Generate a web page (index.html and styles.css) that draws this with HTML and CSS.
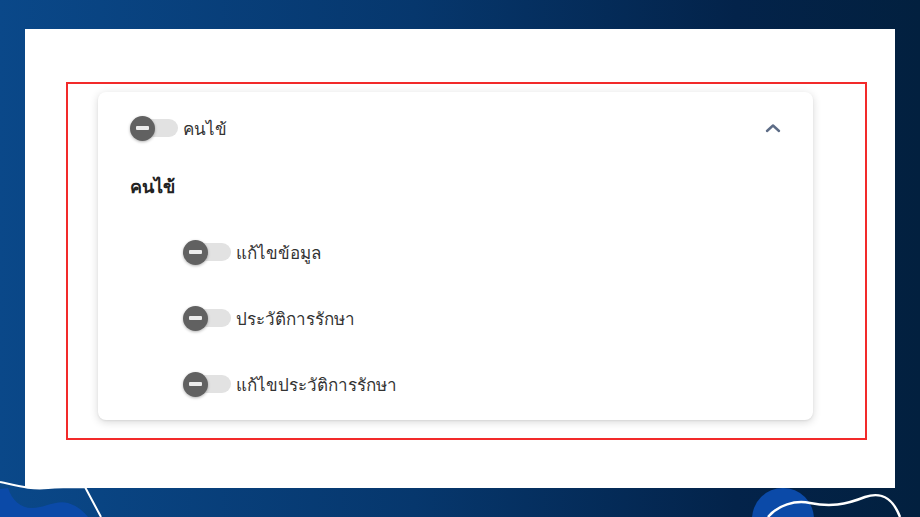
FILE: index.html
```html
<!DOCTYPE html>
<html lang="th">
<head>
  <meta charset="UTF-8">
  <meta name="viewport" content="width=device-width, initial-scale=1.0">
  <title>สิทธิ์การใช้งาน</title>
  <link rel="stylesheet" href="styles.css">
</head>
<body>
  <!-- ลายตกแต่งด้านล่าง -->
  <svg class="deco" viewBox="0 0 920 517" xmlns="http://www.w3.org/2000/svg">
    <path d="M0 489 L8 488 C12 500 20 508 32 508 C45 508 55 500 68 503 C78 506 84 512 88 517 L0 517 Z" fill="#0b4aa8" />
    <path d="M0 482 C15 485 30 490 48 488 C60 487 75 487 85 487 L101 517" fill="none" stroke="#fff" stroke-width="2" />
    <circle cx="783" cy="519" r="31" fill="#0b4aa8" />
    <path d="M768 517 C778 505 795 500 810 503 C830 507 845 505 865 497 C880 492 892 496 900 517" fill="none" stroke="#fff" stroke-width="2.5" />
  </svg>

  <div class="panel">
    <div class="highlight">
      <div class="card">
        <div class="card-header">
          <label class="toggle">
            <span class="switch"><span class="track"></span><span class="thumb"></span></span>
            <span class="toggle-label">คนไข้</span>
          </label>
          <svg class="chevron" viewBox="0 0 16 10" xmlns="http://www.w3.org/2000/svg">
            <path d="M2 8 L8 2.5 L14 8" fill="none" stroke="currentColor" stroke-width="2.4" stroke-linecap="round" stroke-linejoin="round" />
          </svg>
        </div>

        <div class="card-body">
          <p class="group-title">คนไข้</p>
          <div class="perm-list">
            <label class="toggle">
              <span class="switch"><span class="track"></span><span class="thumb"></span></span>
              <span class="toggle-label">แก้ไขข้อมูล</span>
            </label>
            <label class="toggle">
              <span class="switch"><span class="track"></span><span class="thumb"></span></span>
              <span class="toggle-label">ประวัติการรักษา</span>
            </label>
            <label class="toggle">
              <span class="switch"><span class="track"></span><span class="thumb"></span></span>
              <span class="toggle-label">แก้ไขประวัติการรักษา</span>
            </label>
          </div>
        </div>
      </div>
    </div>
  </div>
</body>
</html>
```

FILE: styles.css
```css
body {
  font-family: Roboto, "Noto Sans", Arial, sans-serif;
  margin: 0;
  padding: 29px 25px;
  height: 517px;
  box-sizing: border-box;
  background: linear-gradient(90deg, #0a4889 0%, #06376d 45%, #03234a 80%, #02203f 100%);
  position: relative;
  overflow: hidden;
}
.deco {
  position: absolute;
  left: 0;
  top: 0;
  width: 920px;
  height: 517px;
}
.panel {
  position: relative;
  width: 870px;
  height: 459px;
  background-color: #fff;
  padding: 53px 0 0 41px;
  box-sizing: border-box;
}
.highlight {
  width: 801px;
  border: 2px solid #f22a2a;
  box-sizing: border-box;
  padding: 8px 52px 18px 30px;
}
.card {
  background-color: #fff;
  border-radius: 8px;
  box-shadow: 0 2px 8px rgba(0, 0, 0, 0.16), 0 1px 2px rgba(0, 0, 0, 0.06);
}
.card-header {
  height: 72px;
  display: flex;
  align-items: center;
  justify-content: space-between;
  padding: 0 32px;
}
.chevron {
  width: 16px;
  height: 10px;
  color: #5d6c86;
}
.card-body {
  padding: 11px 32px 24px;
}
.group-title {
  margin: 0;
  font-size: 18px;
  font-weight: bold;
  line-height: 24px;
  color: #222;
}
.perm-list {
  display: flex;
  flex-direction: column;
  gap: 42px;
  margin-top: 41px;
  padding-left: 53px;
}
.toggle {
  display: flex;
  align-items: center;
  height: 24px;
  cursor: pointer;
}
.switch {
  position: relative;
  width: 48px;
  height: 24px;
  flex-shrink: 0;
}
.track {
  position: absolute;
  left: 7px;
  top: 3px;
  width: 41px;
  height: 18px;
  border-radius: 9px;
  background-color: #e2e2e2;
}
.thumb {
  position: absolute;
  left: 0;
  top: -0.5px;
  width: 25px;
  height: 25px;
  border-radius: 50%;
  background-color: #616161;
  box-shadow: 0 1px 3px rgba(0, 0, 0, 0.3);
}
.thumb::after {
  content: "";
  position: absolute;
  left: 6px;
  top: 10.5px;
  width: 13px;
  height: 4px;
  border-radius: 1px;
  background-color: #ececec;
}
.toggle-label {
  margin-left: 5px;
  font-size: 17px;
  color: #333;
}
```
